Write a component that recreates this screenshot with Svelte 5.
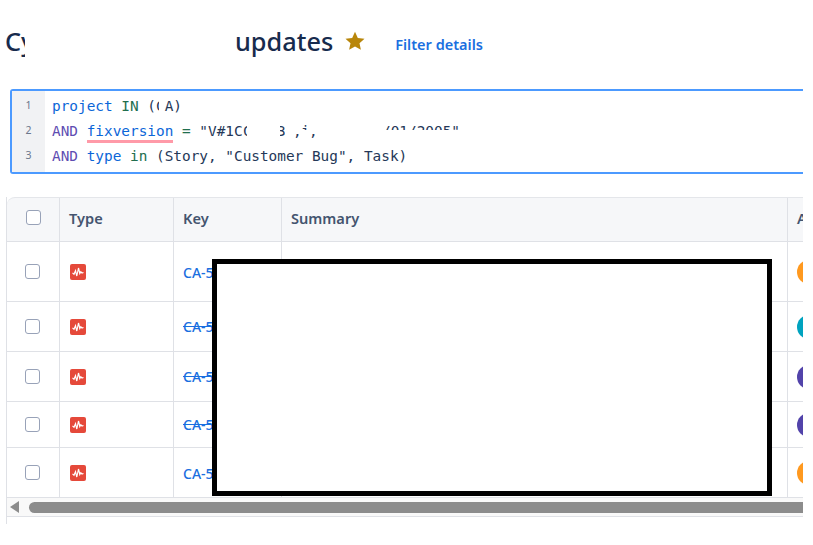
<script>
  const rows = [
    { h: 60, strike: false, color: '#ff991f' },
    { h: 50, strike: true, color: '#00a3bf' },
    { h: 50, strike: true, color: '#5243aa' },
    { h: 46, strike: true, color: '#5243aa' },
    { h: 50, strike: false, color: '#ff991f' }
  ];
</script>

<div class="page">
  <header class="head">
    <div class="title-clip"><h1 class="title">Cy</h1></div>
    <h1 class="title">updates</h1>
    <svg class="star" viewBox="0 0 20 20" width="20" height="20" aria-hidden="true">
      <path d="M10 .8l2.8 6.2 6.7.7-5 4.500 1.400 6.600L10 15.400l-5.900 3.400 1.400-6.600-5-4.500 6.700-.7z" fill="#b8860b" />
    </svg>
    <a class="details" href="#top">Filter details</a>
  </header>

  <section class="editor">
    <div class="gutter"><span>1</span><span>2</span><span>3</span></div>
    <div class="code">
      <div class="line"><span class="blue">project</span> <span class="green">IN</span> ( A)<span class="frag sliver">C</span></div>
      <div class="line"><span class="purple">AND</span> <span class="blue err">fixversion</span> <span class="green">=</span> "V#1C<span class="frag s1">C</span><span class="frag s2"><span class="shift">3</span></span><span class="frag s3">,</span><span class="frag s4">i</span><span class="frag s5">,</span><span class="frag s6">/01/2005"</span></div>
      <div class="line"><span class="purple">AND</span> <span class="blue">type</span> <span class="green">in</span> (Story, "Customer Bug", Task)</div>
    </div>
  </section>

  <section class="table">
    <div class="row header">
      <div class="cell c0"><span class="box"></span></div>
      <div class="cell c1">Type</div>
      <div class="cell c2">Key</div>
      <div class="cell c3">Summary</div>
      <div class="cell c4">A</div>
    </div>
    {#each rows as r}
      <div class="row body" style="height: {r.h}px">
        <div class="cell c0"><span class="box"></span></div>
        <div class="cell c1">
          <svg viewBox="0 0 16 16" width="16" height="16" aria-hidden="true">
            <rect width="16" height="16" rx="2" fill="#e5493a" />
            <path d="M2.500 8.800l1.500 1.500 1.500-3.600 1.300 5.300 1.700-8 1.300 5.500 1-1.800 1.200 1.300 1.500-.5" fill="none" stroke="#fff" stroke-width="1.200" />
          </svg>
        </div>
        <div class="cell c2"><a class="key" class:done={r.strike} href="#top">CA-5</a></div>
        <div class="cell c3"></div>
        <div class="cell c4"><span class="avatar" style="background: {r.color}"></span></div>
      </div>
    {/each}
    <div class="scroll">
      <span class="arrow"></span>
      <span class="thumb"></span>
    </div>
    <div class="redact"></div>
  </section>
</div>

<style>
  :global(body) {
    margin: 0;
    background: #fff;
  }
  .page {
    width: 803px;
    height: 545px;
    overflow: hidden;
    font-family: "Noto Sans", "Open Sans", sans-serif;
    color: #172b4d;
    box-sizing: border-box;
    padding-top: 24px;
  }
  .head {
    display: flex;
    align-items: center;
    height: 34px;
    padding-left: 5px;
  }
  .title-clip {
    width: 20px;
    overflow: hidden;
    margin-right: 210px;
  }
  .title {
    margin: 0;
    font-size: 25.300px;
    line-height: 34px;
    font-weight: 500;
    white-space: nowrap;
  }
  .star {
    margin-left: 12px;
    flex: none;
  }
  .details {
    margin-left: 30px;
    margin-top: 5px;
    font-size: 14.500px;
    font-weight: 600;
    color: #1a6fe0;
    text-decoration: none;
  }
  .editor {
    display: flex;
    margin: 31px 0 0 10px;
    height: 85px;
    width: 800px;
    box-sizing: border-box;
    border: 2px solid #4c9aff;
    border-radius: 3px;
    background: #fff;
  }
  .gutter {
    width: 33px;
    flex: none;
    background: #f1f2f4;
    display: flex;
    flex-direction: column;
    align-items: center;
    padding-top: 4px;
    box-sizing: border-box;
    font-size: 10.500px;
    color: #6b778c;
  }
  .gutter span {
    height: 25px;
    line-height: 20px;
  }
  .code {
    padding: 3px 0 0 7px;
    font-family: "DejaVu Sans Mono", monospace;
    font-size: 14.400px;
    color: #253858;
  }
  .line {
    height: 25px;
    line-height: 24px;
    position: relative;
    white-space: pre;
  }
  .blue { color: #0b66d8; }
  .green { color: #216e4e; }
  .purple { color: #5e4db2; }
  .err {
    border-bottom: 3px solid #ff9aa8;
    padding-bottom: 1px;
  }
  .frag {
    position: absolute;
    top: 0;
    height: 24px;
    overflow: hidden;
  }
  .sliver {
    left: 104px;
    width: 3px;
  }
  .s1 {
    left: 191px;
    width: 4px;
  }
  .s2 {
    left: 228px;
    width: 5px;
  }
  .shift {
    margin-left: -3px;
  }
  .s3 { left: 241px; }
  .s4 { left: 249px; height: 11px; }
  .s5 { left: 257px; }
  .s6 {
    left: 330px;
    height: 11px;
  }
  .table {
    position: relative;
    margin: 23px 0 0 6px;
    width: 830px;
    border-left: 1px solid #dfe1e6;
    box-sizing: border-box;
    padding-bottom: 7px;
  }
  .row {
    display: grid;
    grid-template-columns: 53px 114px 108px 506px 60px;
    border-bottom: 1.500px solid #dfe1e6;
    box-sizing: border-box;
  }
  .header {
    height: 45px;
    border-top: 1.500px solid #e4e6ea;
    border-top-left-radius: 8px;
    background: #f6f7f9;
    font-size: 14.600px;
    font-weight: 600;
    color: #44546f;
  }
  .cell {
    display: flex;
    align-items: center;
    padding-left: 9px;
    border-right: 1.500px solid #dfe1e6;
    box-sizing: border-box;
  }
  .header .cell {
    padding-bottom: 3px;
  }
  .c0 {
    padding-left: 19px;
  }
  .body .c0 {
    padding-left: 18px;
  }
  .c1 svg {
    margin-left: 1px;
  }
  .c4 {
    border-right: 0;
  }
  .box {
    width: 15px;
    height: 15px;
    box-sizing: border-box;
    border: 1.500px solid #98a2b8;
    border-radius: 3px;
    background: #fff;
  }
  .header .box {
    margin-top: -1px;
  }
  .key {
    margin-top: 1px;
    font-size: 14px;
    font-weight: 500;
    color: #1a6fe0;
    text-decoration: none;
  }
  .done {
    margin-top: -1px;
    text-decoration: line-through;
  }
  .avatar {
    width: 24px;
    height: 24px;
    border-radius: 50%;
    flex: none;
  }
  .scroll {
    display: flex;
    align-items: center;
    height: 19px;
    background: #f9f9f9;
    border-bottom: 1.500px solid #dfe1e6;
    box-sizing: border-box;
  }
  .arrow {
    width: 0;
    height: 0;
    border-style: solid;
    border-width: 6px 9px 6px 0;
    border-color: transparent #8c8c8c transparent transparent;
    margin-left: 3px;
  }
  .thumb {
    flex: 1;
    height: 11px;
    margin-left: 10px;
    border-radius: 6px 0 0 6px;
    background: #8c8c8c;
  }
  .redact {
    position: absolute;
    left: 205px;
    top: 62px;
    width: 560px;
    height: 237px;
    box-sizing: border-box;
    border: 5px solid #000;
    background: #fff;
  }
</style>
